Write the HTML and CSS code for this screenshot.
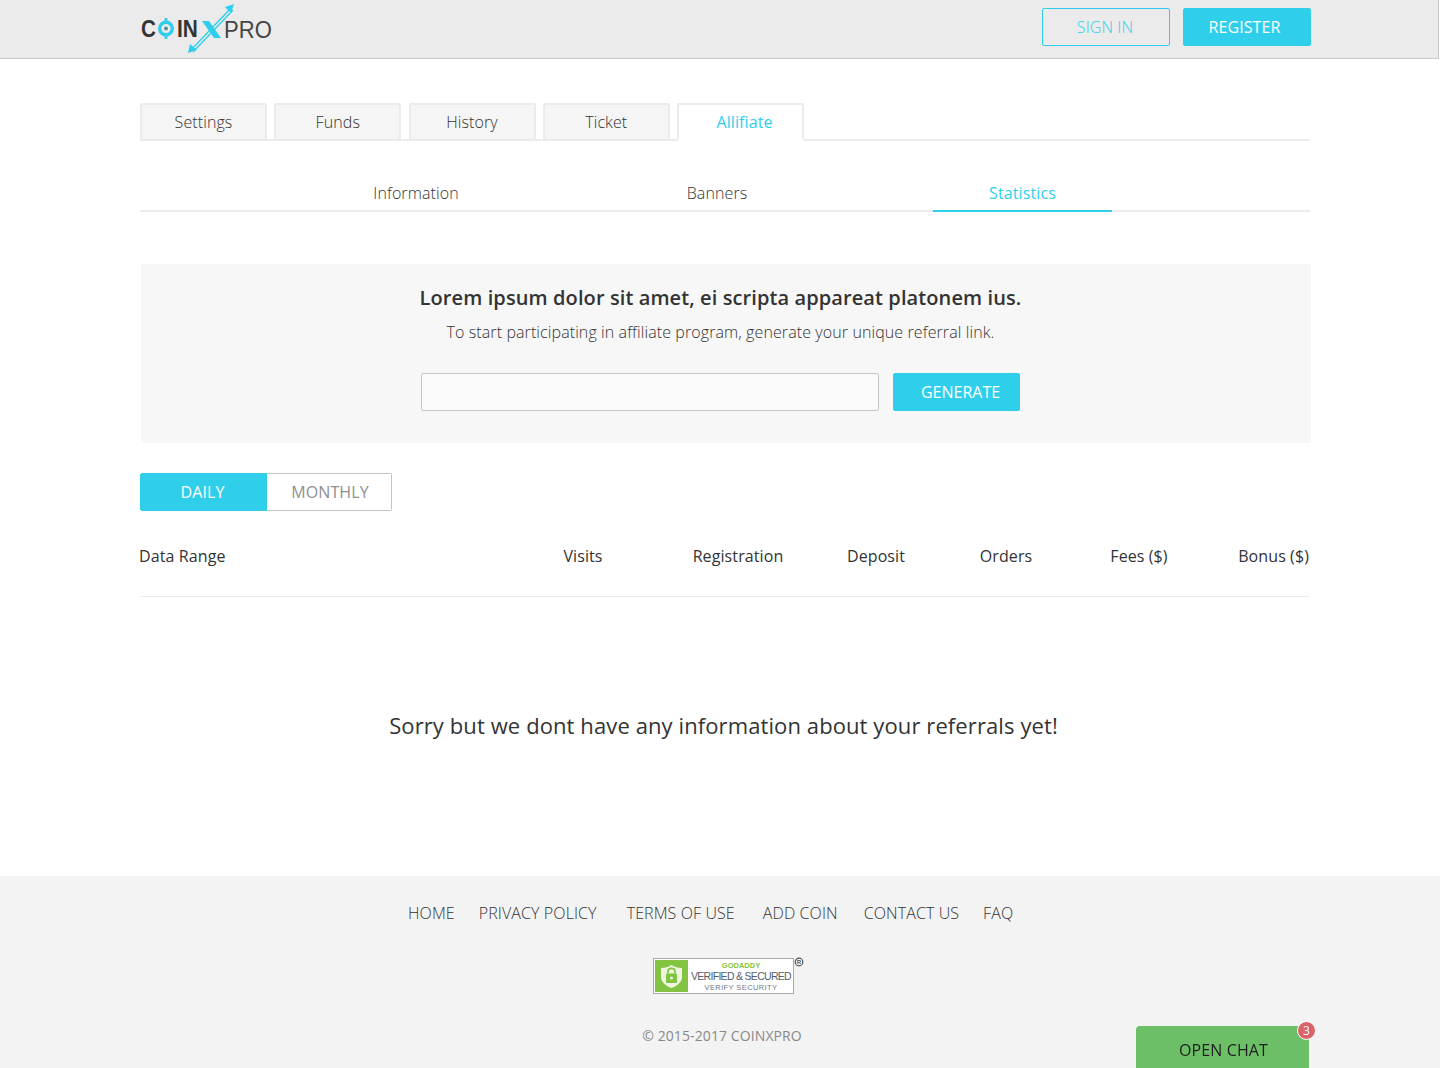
FILE: index.html
```html
<!DOCTYPE html>
<html lang="en">
<head>
  <meta charset="UTF-8">
  <meta name="viewport" content="width=device-width, initial-scale=1.0">
  <title>CoinXPro - Affiliate</title>
  <link rel="stylesheet" href="styles.css">
</head>
<body>
  <header class="top-bar">
    <div class="wrap top-bar-inner">
      <a class="logo" href="#">
        <svg width="136" height="58" viewBox="0 0 136 58">
          <text x="1" y="37" class="logo-bold" textLength="15" lengthAdjust="spacingAndGlyphs">C</text>
          <circle cx="26" cy="28.500" r="6.300" fill="none" stroke="#2fcfec" stroke-width="3.400"/>
          <circle cx="26" cy="28.500" r="2" fill="#5a8c9c"/>
          <rect x="24.600" y="18" width="2.800" height="3" fill="#2fcfec"/>
          <rect x="24.600" y="36" width="2.800" height="3" fill="#2fcfec"/>
          <text x="37" y="37" class="logo-bold" textLength="21" lengthAdjust="spacingAndGlyphs">IN</text>
          <path d="M50 51 L91 8 M53 52 L93 10" stroke="#2fcfec" stroke-width="1.300" fill="none"/>
          <path d="M94 4 L91 13 L85 7 Z" fill="#2fcfec"/>
          <path d="M48 53 L50 44 L57 50 Z" fill="#2fcfec"/>
          <path d="M62 21 L69 21 L81 38 L74 38 Z" fill="#2fcfec"/>
          <text x="84" y="37.500" class="logo-thin" textLength="48" lengthAdjust="spacingAndGlyphs">PRO</text>
        </svg>
      </a>
      <div class="top-actions">
        <a class="btn btn-outline" href="#">SIGN IN</a>
        <a class="btn btn-solid" href="#">REGISTER</a>
      </div>
    </div>
  </header>

  <main class="wrap">
    <ul class="tabs">
      <li class="tab">Settings</li>
      <li class="tab">Funds</li>
      <li class="tab">History</li>
      <li class="tab">Ticket</li>
      <li class="tab active">Allifiate</li>
    </ul>

    <div class="subtabs">
      <a class="subtab" href="#">Information</a>
      <a class="subtab" href="#">Banners</a>
      <a class="subtab active" href="#">Statistics</a>
    </div>

    <section class="ref-panel">
      <h2>Lorem ipsum dolor sit amet, ei scripta appareat platonem ius.</h2>
      <p>To start participating in affiliate program, generate your unique referral link.</p>
      <div class="ref-form">
        <input class="ref-input" type="text">
        <button class="btn btn-solid btn-generate">GENERATE</button>
      </div>
    </section>

    <div class="toggle">
      <a class="toggle-item active" href="#">DAILY</a>
      <a class="toggle-item" href="#">MONTHLY</a>
    </div>

    <div class="stats-head">
      <span class="col-range">Data Range</span>
      <span>Visits</span>
      <span>Registration</span>
      <span>Deposit</span>
      <span>Orders</span>
      <span>Fees ($)</span>
      <span class="col-bonus">Bonus ($)</span>
    </div>

    <p class="empty-msg">Sorry but we dont have any information about your referrals yet!</p>
  </main>

  <footer class="footer">
    <nav class="footer-nav">
      <a href="#">HOME</a>
      <a href="#" class="wide">PRIVACY POLICY</a>
      <a href="#" class="mid">TERMS OF USE</a>
      <a href="#" class="tight">ADD COIN</a>
      <a href="#">CONTACT US</a>
      <a href="#">FAQ</a>
    </nav>
    <div class="seal">
      <svg width="152" height="38" viewBox="0 0 152 38">
        <rect x="0.500" y="1.500" width="140" height="35" fill="#fff" stroke="#a9a9a9"/>
        <rect x="2" y="3" width="33" height="32" fill="#82c341"/>
        <path d="M18.500 8 C21.500 10 25 11 29 11 L29 20 C29 25.500 24 29 18.500 31 C13 29 8 25.500 8 20 L8 11 C12 11 15.500 10 18.500 8 Z" fill="#eef6e2"/>
        <rect x="13" y="16.500" width="11" height="9.500" rx="1" fill="#82c341"/>
        <path d="M15 16.500 L15 14.500 C15 10.300 22 10.300 22 14.500 L22 16.500" fill="none" stroke="#82c341" stroke-width="1.700"/>
        <circle cx="18.500" cy="21" r="1.500" fill="#eef6e2"/>
        <text x="88" y="11" class="seal-top">GODADDY</text>
        <text x="88" y="23" class="seal-mid">VERIFIED &amp; SECURED</text>
        <text x="88" y="33" class="seal-low">VERIFY SECURITY</text>
        <circle cx="146" cy="5" r="3.800" fill="none" stroke="#555" stroke-width="1.200"/>
        <text x="146" y="7" class="seal-reg">R</text>
      </svg>
    </div>
    <p class="copyright">© 2015-2017 COINXPRO</p>
  </footer>

  <a class="chat" href="#">OPEN CHAT<span class="chat-count">3</span></a>
</body>
</html>
```

FILE: styles.css
```css
* {
  box-sizing: border-box;
}
body {
  margin: 0;
  font-family: "Open Sans", Arial, sans-serif;
  font-weight: 300;
  letter-spacing: 0.1px;
  color: #333;
  background-color: #fff;
  overflow: hidden;
}
a {
  color: inherit;
  text-decoration: none;
}
.wrap {
  width: 1170px;
  margin-left: 140px;
}
.top-bar {
  height: 59px;
  width: 1439px;
  background-color: #ebebeb;
  border-bottom: 1px solid #c9c9c9;
  border-right: 1px solid #c9c9c9;
}
.top-bar-inner {
  display: flex;
  justify-content: space-between;
  width: 1171px;
}
.logo {
  display: block;
  height: 58px;
}
.logo-bold {
  font-family: "Liberation Sans", Arial, sans-serif;
  font-size: 24px;
  font-weight: 700;
  fill: #333;
}
.logo-thin {
  font-family: "Liberation Sans", Arial, sans-serif;
  font-size: 24px;
  font-weight: 400;
  fill: #444;
}
.top-actions {
  display: flex;
  gap: 13px;
  padding-top: 8px;
}
.btn {
  display: block;
  height: 38px;
  line-height: 36px;
  font-size: 16px;
  text-align: center;
  border-radius: 2px;
  border: 1px solid #2fcfec;
  font-family: inherit;
  font-weight: 300;
}
.btn-outline {
  width: 128px;
  padding-right: 2px;
  color: #2fcfec;
}
.btn-solid {
  width: 128px;
  padding-right: 5px;
  color: #fff;
  background-color: #2fcfec;
  font-weight: 400;
}
.tabs {
  list-style: none;
  margin: 44px 0 0;
  padding: 0;
  display: flex;
  gap: 7.25px;
  height: 38px;
  border-bottom: 2px solid #ebebeb;
}
.tab {
  width: 127px;
  height: 38px;
  line-height: 35px;
  text-align: center;
  font-size: 16px;
  background-color: #f5f5f5;
  border: 2px solid #ebebeb;
  border-radius: 2px 2px 0 0;
}
.tab.active {
  padding-left: 8px;
  color: #2fcfec;
  font-weight: 400;
  background-color: #fff;
  border-bottom-color: #fff;
}
.subtabs {
  display: grid;
  grid-template-columns: 170px 432px 179px;
  padding-left: 191px;
  margin-top: 31px;
  height: 40px;
  border-bottom: 2px solid #ebebeb;
}
.subtab {
  height: 40px;
  line-height: 43px;
  text-align: center;
  font-size: 16px;
}
.subtab.active {
  color: #2fcfec;
  font-weight: 400;
  border-bottom: 2px solid #2fcfec;
}
.ref-panel {
  margin: 52px -1px 0 1px;
  height: 179px;
  padding: 20px 11px 0 0;
  background-color: #f7f7f7;
  text-align: center;
}
.ref-panel h2 {
  margin: 0;
  font-size: 20px;
  line-height: 28px;
  font-weight: 600;
}
.ref-panel p {
  margin: 9px 0 0;
  font-size: 16px;
  line-height: 22px;
}
.ref-form {
  display: flex;
  gap: 14px;
  margin: 30px 0 0 280px;
}
.ref-input {
  flex: none;
  width: 458px;
  height: 38px;
  background-color: #fafafa;
  border: 1px solid #c4c4c4;
  border-radius: 2px;
}
.btn-generate {
  flex: none;
  width: 127px;
  padding: 0 0 0 8px;
}
.toggle {
  display: flex;
  margin-top: 30px;
  width: 252px;
  height: 38px;
}
.toggle-item {
  flex: 1;
  line-height: 36px;
  padding-left: 2px;
  text-align: center;
  font-size: 16px;
  font-weight: 400;
  color: #8f8f8f;
  border: 1px solid #c4c4c4;
  border-left: 0;
  border-radius: 0 2px 2px 0;
}
.toggle-item.active {
  flex: 0 0 127px;
  padding: 0 2px 0 0;
  color: #fff;
  background-color: #2fcfec;
  border: 1px solid #2fcfec;
  border-radius: 2px 0 0 2px;
}
.stats-head {
  display: grid;
  grid-template-columns: 378px 130px 180px 96px 164px 102px 119px;
  width: 1169px;
  height: 86px;
  padding-top: 33px;
  border-bottom: 1px solid #ebebeb;
  font-size: 16px;
  line-height: 24px;
  font-weight: 400;
  text-align: center;
}
.col-range {
  text-align: left;
  margin-left: -1px;
}
.col-bonus {
  text-align: right;
}
.empty-msg {
  margin: 113px 0 0;
  width: 1167px;
  height: 166px;
  text-align: center;
  font-size: 22px;
  line-height: 30px;
  font-weight: 400;
}
.footer {
  height: 192px;
  padding-top: 25px;
  background-color: #f3f3f3;
}
.footer-nav {
  display: flex;
  justify-content: flex-start;
  padding-left: 408px;
  gap: 24px;
  font-size: 16px;
  line-height: 24px;
}
.footer-nav .wide {
  margin-right: 6px;
}
.footer-nav .mid {
  margin-right: 4px;
}
.footer-nav .tight {
  margin-right: 2px;
}
.seal {
  margin: 32px 0 0 653px;
  height: 38px;
}
.seal svg {
  display: block;
}
.seal text {
  font-family: "Liberation Sans", Arial, sans-serif;
  text-anchor: middle;
  letter-spacing: 0;
}
.seal .seal-top {
  font-size: 7.5px;
  font-weight: 700;
  fill: #82c341;
}
.seal .seal-mid {
  font-size: 10.5px;
  letter-spacing: -0.7px;
  fill: #555e6b;
}
.seal .seal-low {
  font-size: 7.5px;
  letter-spacing: 0.4px;
  fill: #6f7a8c;
}
.seal .seal-reg {
  font-size: 6px;
  font-weight: 700;
  fill: #555;
}
.copyright {
  margin: 31px 0 0;
  width: 1444px;
  text-align: center;
  font-size: 14px;
  line-height: 20px;
  font-weight: 400;
  color: #888;
}
.chat {
  position: fixed;
  left: 1136px;
  bottom: 0;
  width: 173px;
  height: 42px;
  line-height: 48px;
  padding-left: 2px;
  text-align: center;
  font-size: 16px;
  font-weight: 400;
  color: #1f1f1f;
  background-color: #6dbf67;
  border-radius: 4px 4px 0 0;
}
.chat-count {
  position: absolute;
  top: -5px;
  right: -7px;
  width: 19px;
  height: 19px;
  line-height: 17px;
  border: 1px solid #fff;
  border-radius: 50%;
  font-size: 12px;
  color: #fff;
  background-color: #d9646a;
}
```
